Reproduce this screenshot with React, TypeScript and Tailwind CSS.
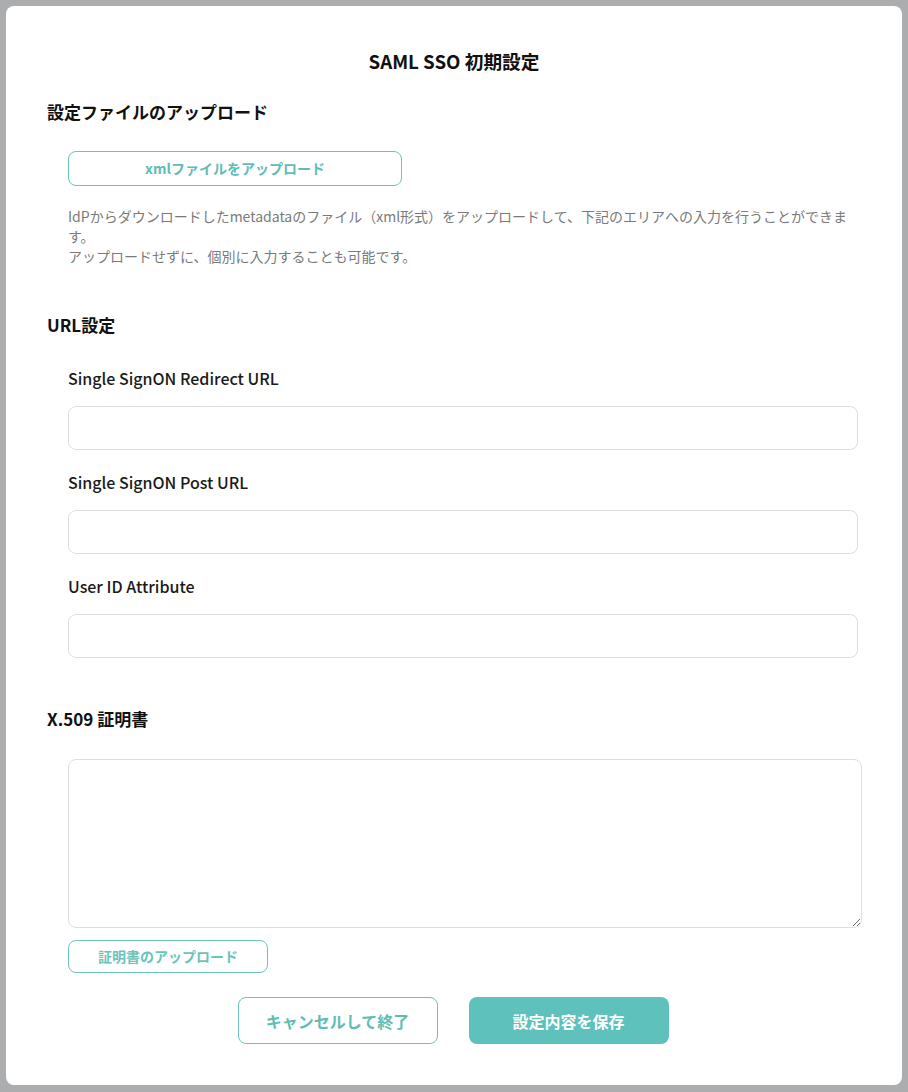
import React from "react";

const font = { fontFamily: '"Noto Sans CJK JP", "Noto Sans", sans-serif' };

function Field({ label, first }: { label: string; first?: boolean }) {
  return (
    <div className={first ? "mt-[29px]" : "mt-[20px]"}>
      <div className="text-[16px] leading-[24px] font-medium text-[#1a1a1a]">{label}</div>
      <input
        type="text"
        className="mt-[16px] block h-[44px] w-[790px] rounded-[8px] border border-[#dedede] bg-white outline-none"
      />
    </div>
  );
}

export default function App() {
  return (
    <div style={font} className="h-[1092px] w-[908px] bg-[#acadaf] pt-[6px] pl-[6px]">
      <div className="h-[1079px] w-[896px] rounded-[8px] bg-white px-[41px] pt-[43px]">
        <h1 className="text-center text-[18.7px] leading-[24px] font-bold text-[#111]">SAML SSO 初期設定</h1>

        <h2 className="mt-[27px] text-[17px] leading-[24px] font-bold text-[#111]">設定ファイルのアップロード</h2>
        <div className="pl-[21px]">
          <button className="mt-[27px] flex h-[35px] w-[334px] items-center justify-center rounded-[8px] border border-[#6cc3bc] bg-white text-[14px] font-bold text-[#5ebdb5]">
            xmlファイルをアップロード
          </button>
          <p className="mt-[20px] w-[790px] text-[14px] leading-[20px] text-[#7a7a7a]">
            IdPからダウンロードしたmetadataのファイル（xml形式）をアップロードして、下記のエリアへの入力を行うことができます。
            <br />
            アップロードせずに、個別に入力することも可能です。
          </p>
        </div>

        <h2 className="mt-[47px] text-[17px] leading-[24px] font-bold text-[#111]">URL設定</h2>
        <div className="pl-[21px]">
          <Field label="Single SignON Redirect URL" first />
          <Field label="Single SignON Post URL" />
          <Field label="User ID Attribute" />
        </div>

        <h2 className="mt-[49px] text-[17px] leading-[24px] font-bold text-[#111]">X.509 証明書</h2>
        <div className="pl-[21px]">
          <textarea className="mt-[28px] block h-[169px] w-[794px] rounded-[8px] border border-[#dedede] bg-white outline-none" />
          <button className="mt-[12px] flex h-[33px] w-[200px] items-center justify-center rounded-[8px] border border-[#6cc3bc] bg-white text-[14px] font-bold text-[#6cc3bc]">
            証明書のアップロード
          </button>
        </div>

        <div className="mt-[24px] flex justify-center gap-[31px] pr-[2px]">
          <button className="flex h-[47px] w-[200px] items-center justify-center rounded-[8px] border border-[#6cc3bc] bg-white text-[16px] font-bold text-[#5ebdb5]">
            キャンセルして終了
          </button>
          <button className="flex h-[47px] w-[200px] items-center justify-center rounded-[8px] bg-[#5fc1bb] text-[16px] font-bold text-white">
            設定内容を保存
          </button>
        </div>
      </div>
    </div>
  );
}
